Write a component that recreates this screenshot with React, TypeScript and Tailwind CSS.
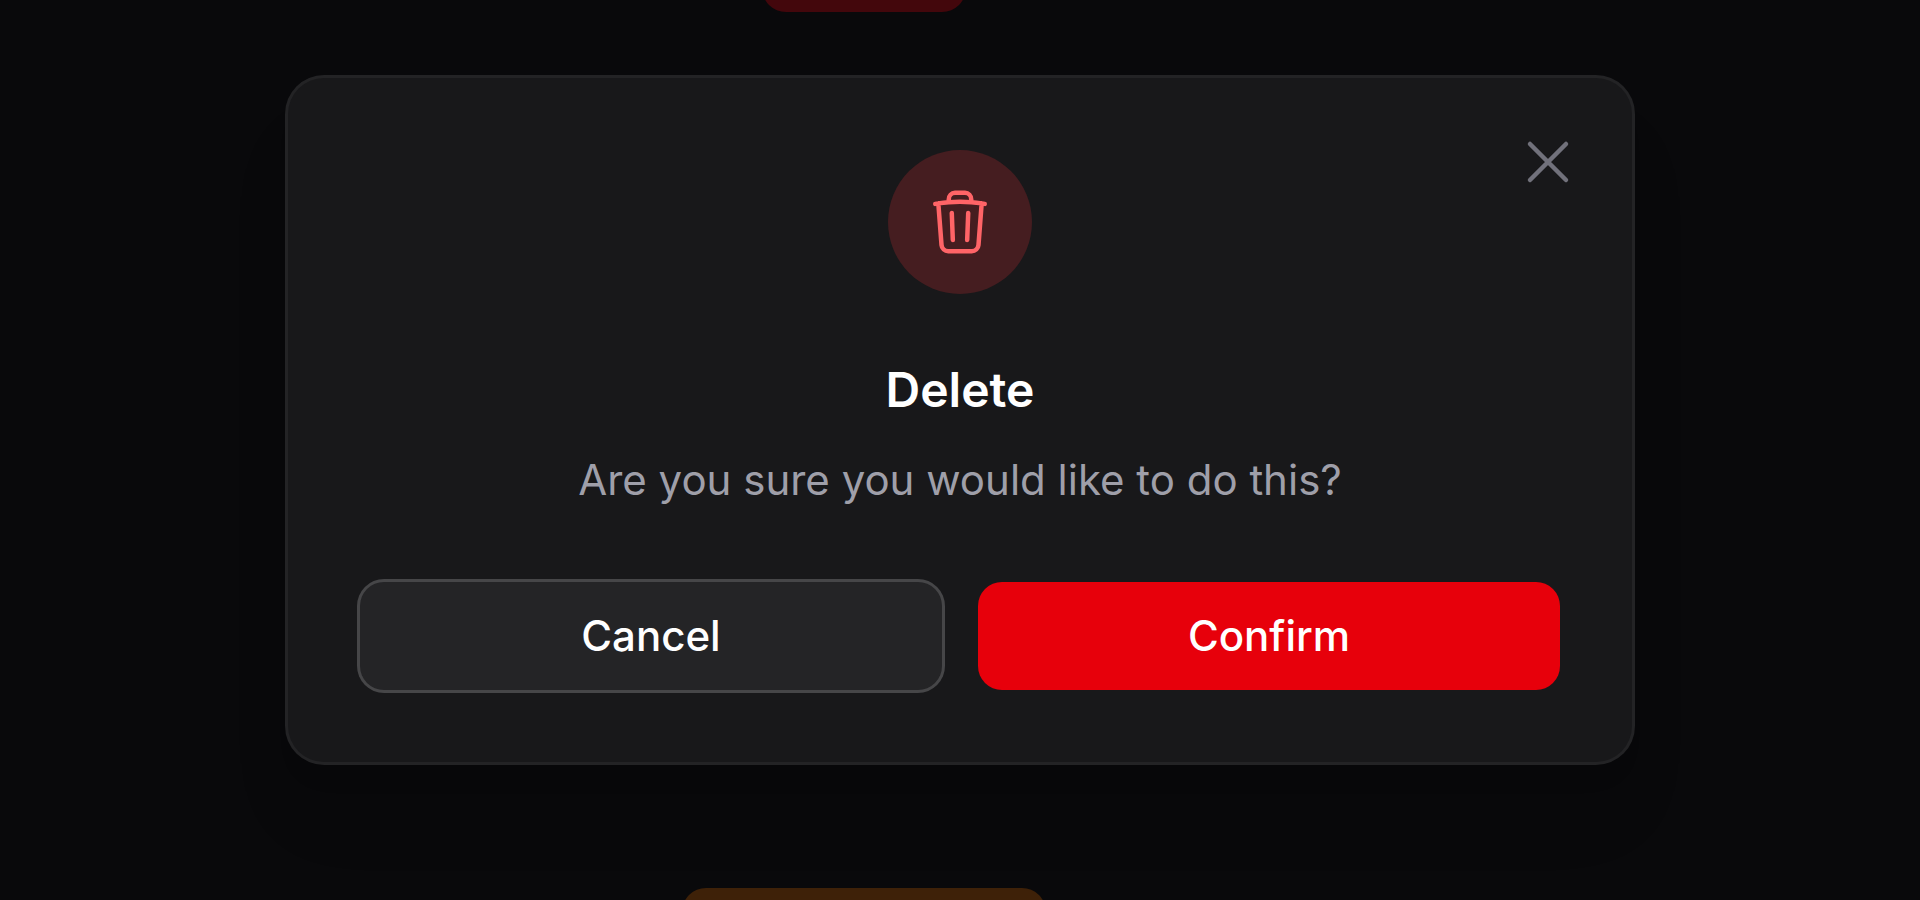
function TrashIcon() {
  return (
    <svg className="size-18" viewBox="0 0 24 24" fill="none" stroke="currentColor" strokeWidth={1.5} strokeLinecap="round" strokeLinejoin="round" aria-hidden="true">
      <path d="m14.74 9-.346 9m-4.788 0L9.26 9m9.968-3.21c.342.052.682.107 1.022.166m-1.022-.165L18.16 19.673a2.25 2.25 0 0 1-2.244 2.077H8.084a2.25 2.25 0 0 1-2.244-2.077L4.772 5.79m14.456 0a48.108 48.108 0 0 0-3.478-.397m-12 .562c.34-.059.68-.114 1.022-.165m0 0a48.11 48.11 0 0 1 3.478-.397m7.5 0v-.916c0-1.18-.91-2.164-2.09-2.201a51.964 51.964 0 0 0-3.32 0c-1.18.037-2.09 1.022-2.09 2.201v.916m7.5 0a48.667 48.667 0 0 0-7.5 0" />
    </svg>
  );
}

function CloseIcon() {
  return (
    <svg className="size-18" viewBox="0 0 24 24" fill="none" stroke="currentColor" strokeWidth={1.5} strokeLinecap="round" strokeLinejoin="round" aria-hidden="true">
      <path d="M6 18 18 6M6 6l12 12" />
    </svg>
  );
}

/* Dimmed page behind the dialog */
function Backdrop() {
  return (
    <div className="col-start-1 row-start-1 flex h-screen flex-col items-center justify-between overflow-hidden pr-48" inert>
      <button type="button" aria-label="Delete" className="-mt-24 h-27 w-51 rounded-3xl bg-[#43070c]" />
      <button type="button" aria-label="Edit" className="-mb-24 h-27 w-91 rounded-3xl bg-[#3e2108]" />
    </div>
  );
}

function DeleteDialog() {
  return (
    <div
      role="dialog"
      aria-modal="true"
      aria-labelledby="dialog-title"
      aria-describedby="dialog-description"
      className="relative w-full max-w-[1344px] rounded-[36px] bg-[#18181a] p-18 text-center shadow-[0_60px_75px_-15px_rgb(0_0_0/0.1),0_24px_30px_-18px_rgb(0_0_0/0.1)] ring-3 ring-[#232325]"
    >
      <button type="button" aria-label="Close" className="absolute top-12 right-12 text-[#71717b]">
        <CloseIcon />
      </button>
      <div className="mx-auto mb-15 flex size-36 items-center justify-center rounded-full bg-[#451d20] text-[#ff6467]">
        <TrashIcon />
      </div>
      <h2 id="dialog-title" className="text-[48px] leading-18 font-semibold text-white">
        Delete
      </h2>
      <p id="dialog-description" className="mt-6 text-[42px] leading-15 text-[#9f9fa9]">
        Are you sure you would like to do this?
      </p>
      <div className="mt-18 grid grid-cols-2 gap-9 text-[42px] leading-15 font-medium text-white">
        <button type="button" className="rounded-3xl bg-[#242426] py-6 ring-3 ring-[#464648]">
          Cancel
        </button>
        <button type="button" className="rounded-3xl bg-[#e7000b] py-6">
          Confirm
        </button>
      </div>
    </div>
  );
}

export default function App() {
  return (
    <main className="grid min-h-screen bg-[#09090b] font-['Inter',sans-serif] antialiased [font-optical-sizing:none]">
      <Backdrop />
      <div className="z-10 col-start-1 row-start-1 flex items-center justify-center px-6 pb-15">
        <DeleteDialog />
      </div>
    </main>
  );
}
